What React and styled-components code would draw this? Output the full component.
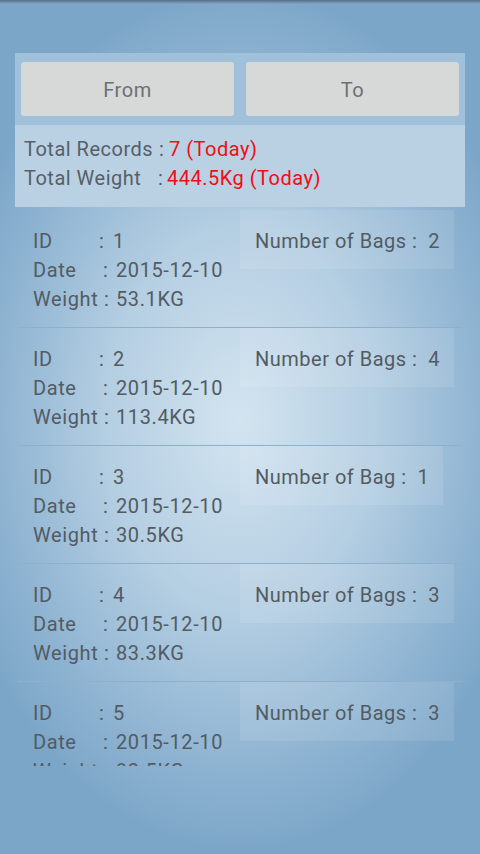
import React from 'react';
import styled, { createGlobalStyle } from 'styled-components';

const GlobalStyle = createGlobalStyle`
  html, body {
    margin: 0;
    padding: 0;
  }
  body {
    font-family: Roboto, 'Liberation Sans', sans-serif;
  }
`;

const Screen = styled.div`
  width: 480px;
  height: 854px;
  overflow: hidden;
  display: flex;
  flex-direction: column;
  background: radial-gradient(ellipse 300px 430px at 240px 420px, #d3e4f0 0%, #b4cee2 45%, #8fb4d2 80%, #7ca6c8 100%);
`;

const StatusEdge = styled.div`
  height: 4px;
  background: linear-gradient(#556d83 0%, #6e8ca6 50%, rgba(124, 166, 200, 0) 100%);
`;

const Header = styled.div`
  margin: 49px 15px 0;
  display: flex;
  flex-direction: column;
`;

const ButtonRow = styled.div`
  display: flex;
  gap: 12px;
  padding: 9px 6px;
  background: #a1c0da;
`;

const DateButton = styled.button`
  flex: 1;
  height: 54px;
  padding: 2px 0 0;
  border: none;
  border-radius: 3px;
  background: #d7d9d9;
  color: #6c7072;
  font-family: Roboto, 'Liberation Sans', sans-serif;
  font-size: 20px;
  letter-spacing: 0.6px;
  cursor: pointer;
`;

const Summary = styled.div`
  background: #bad1e4;
  padding: 10px 9px 14px;
  font-size: 20px;
  line-height: 29px;
  letter-spacing: 0.5px;
  color: #566067;
`;

const Line = styled.div`
  white-space: pre;
`;

const Label = styled.span`
  display: inline-block;
  width: ${(p) => p.$w}px;
`;

const Sep = styled.span`
  display: inline-block;
  width: ${(p) => p.$w}px;
`;

const Red = styled.span`
  color: #f20c14;
`;

const List = styled.div`
  margin: 3px 18px 0;
  height: 556px;
  overflow: hidden;
`;

const Item = styled.div`
  display: flex;
  height: 117px;
  border-bottom: 1px solid #8fb0c9;
`;

const Details = styled.div`
  width: 207px;
  padding: 17px 0 0 15px;
  font-size: 20px;
  line-height: 29px;
  letter-spacing: 0.6px;
  color: #535b63;
`;

const Bags = styled.div`
  align-self: flex-start;
  height: 59px;
  box-sizing: border-box;
  padding: 17px 14px 0 15px;
  background: rgba(255, 255, 255, 0.1);
  font-size: 20px;
  line-height: 29px;
  letter-spacing: 0.5px;
  color: #535b63;
  white-space: pre;
`;

const records = [
  { id: 1, date: '2015-12-10', weight: '53.1KG', bags: 2 },
  { id: 2, date: '2015-12-10', weight: '113.4KG', bags: 4 },
  { id: 3, date: '2015-12-10', weight: '30.5KG', bags: 1 },
  { id: 4, date: '2015-12-10', weight: '83.3KG', bags: 3 },
  { id: 5, date: '2015-12-10', weight: '92.5KG', bags: 3 },
  { id: 6, date: '2015-12-10', weight: '40.2KG', bags: 2 },
  { id: 7, date: '2015-12-10', weight: '31.5KG', bags: 1 },
];

const App = () => {
  return (
    <Screen>
      <GlobalStyle />
      <StatusEdge />
      <Header>
        <ButtonRow>
          <DateButton>From</DateButton>
          <DateButton>To</DateButton>
        </ButtonRow>
        <Summary>
          <Line>
            <Label $w={135}>Total Records</Label>
            <Sep $w={10}>:</Sep>
            <Red>7 (Today)</Red>
          </Line>
          <Line>
            <Label $w={134}>Total Weight</Label>
            <Sep $w={9}>:</Sep>
            <Red>444.5Kg (Today)</Red>
          </Line>
        </Summary>
      </Header>
      <List>
        {records.map((r) => (
          <Item key={r.id}>
            <Details>
              <Line>
                <Label $w={66}>ID</Label>
                <Sep $w={14}>:</Sep>
                {r.id}
              </Line>
              <Line>
                <Label $w={70}>Date</Label>
                <Sep $w={13}>:</Sep>
                {r.date}
              </Line>
              <Line>
                <Label $w={71}>Weight</Label>
                <Sep $w={12}>:</Sep>
                {r.weight}
              </Line>
            </Details>
            <Bags>
              {r.bags === 1 ? 'Number of Bag :  1' : `Number of Bags :  ${r.bags}`}
            </Bags>
          </Item>
        ))}
      </List>
    </Screen>
  );
};

export default App;
